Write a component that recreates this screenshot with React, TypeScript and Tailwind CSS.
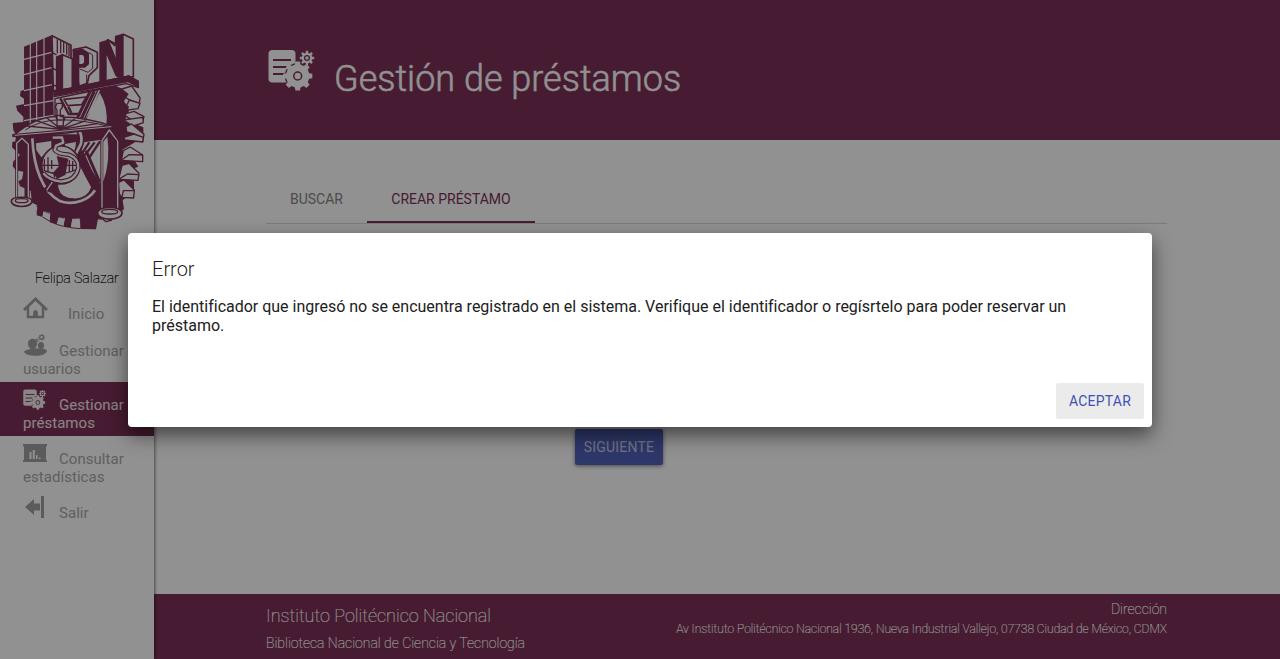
import React from "react";

const D = "#7d3156";
const G = "#ffffff";

function gear(cx: number, cy: number, ro: number, ri: number, teeth: number, hole: number) {
  const pts: string[] = [];
  const step = (Math.PI * 2) / teeth;
  for (let i = 0; i < teeth; i++) {
    const a = i * step - Math.PI / 2;
    const at = (r: number, t: number) =>
      `${(cx + r * Math.cos(a + t * step)).toFixed(2)} ${(cy + r * Math.sin(a + t * step)).toFixed(2)}`;
    pts.push(at(ri, -0.3), at(ro, -0.2), at(ro, 0.2), at(ri, 0.3));
  }
  return (
    `M${pts.join("L")}Z` +
    `M${cx - hole} ${cy}a${hole} ${hole} 0 1 0 ${hole * 2} 0a${hole} ${hole} 0 1 0 ${-hole * 2} 0Z`
  );
}

function LoanIcon({ className, back }: { className: string; back: string }) {
  return (
    <svg viewBox="0 0 48 42" className={className} fill="currentColor">
      <rect x="0.5" y="1" width="27" height="32.5" rx="4" />
      <path d="M5 11h18M5 18h16M5 25h13" stroke={back} strokeWidth="1.8" />
      <circle cx="29.7" cy="27" r="13" fill={back} />
      <path fillRule="evenodd" d={gear(29.7, 27, 14.8, 11.8, 8, 4.7)} />
      <circle cx="29.7" cy="27" r="3.2" />
      <path fillRule="evenodd" d={gear(39, 9, 7.3, 5.3, 8, 3)} />
      <circle cx="39" cy="9" r="1.7" />
    </svg>
  );
}

function HomeIcon() {
  return (
    <svg viewBox="0 0 25 22" className="h-[22px] w-[25px]" fill="none" stroke="currentColor">
      <path d="M1 13L12.5 2L24 13" strokeWidth="2.8" />
      <path d="M5 10V20H20V10" strokeWidth="2.4" />
      <path d="M10.5 20V15.5a2 2 0 0 1 4 0V20Z" fill="currentColor" strokeWidth="0.8" />
    </svg>
  );
}

function UsersIcon() {
  return (
    <svg viewBox="0 0 25 22" className="h-[22px] w-[25px]" fill="currentColor">
      <ellipse cx="9.5" cy="9.8" rx="4.6" ry="5" />
      <ellipse cx="18" cy="11.5" rx="3.1" ry="3.5" />
      <path d="M1 17.500c1.500-1.500 4-2 6.500-2.500V12h4v2c2 .4 3.500.8 5 .4V13h3v1.500c2 .5 4.500 1 4.500 2.500c-1 3-5 4.500-10 4.800C8 22 2 21 1 17.500Z" />
      <path fillRule="evenodd" d={gear(18.7, 3.3, 3.3, 2.5, 8, 1.3)} />
      <path fillRule="evenodd" d={gear(14, 6.2, 1.9, 1.4, 8, 0.6)} />
    </svg>
  );
}

function StatsIcon() {
  return (
    <svg viewBox="0 0 24 19" className="mt-[2px] h-[19px] w-[24px]" fill="currentColor">
      <path d="M0 0h24v2.500h-1V16h1v2H0v-2h1V2.500H0Z" />
      <path d="M6.500 8h2v7h-2ZM9.800 6h2v9h-2ZM13 11h1.600v4H13ZM15.800 13.500h1.700V15h-1.700Z" fill="#fff" />
    </svg>
  );
}

function ExitIcon() {
  return (
    <svg viewBox="0 0 20 22" className="ml-[2px] h-[22px] w-5" fill="currentColor">
      <path d="M0 11L9 3.000V7.500h6v7H9V19ZM16 0h3v22h-3Z" />
    </svg>
  );
}

function Emblem() {
  return (
    <svg viewBox="24 30 420 612" className="h-[204px] w-[140px]" strokeLinejoin="round">
      <path
        fill={D}
        d="M72 210L62 213L60 228L72 236V252L48 257L52 272L70 290V306L38 309L40 330L48 345L46 364L37 366L36 382L60 405L40 424L38 438L47 451L70 455L66 478L55 484L60 499L92 512L96 548L112 556L110 586L128 591L133 572L151 580L148 606L170 614L178 592L195 594L190 620L212 624L218 594L240 596L241 627L288 628L294 596L345 585L372 568L368 540L402 518V484L372 455L415 440L398 412L366 390L400 370L430 350V322L375 300L388 270L370 240L386 220L345 196L165 235V300L72 300Z"
      />
      <g fill={G} stroke={D} strokeWidth="4">
        <path d="M366 207L395 198L420 234L418 250L388 240L367 225Z" />
        <path d="M388 240L420 250L414 266L373 271Z" />
        <path d="M370 283L402 274L432 290L428 303L392 298Z" />
        <path d="M370 300L428 292L430 308L400 318Z" />
        <path d="M378 320L395 312L432 343L428 365L402 342L380 336Z" />
        <path d="M372 352L402 342L430 352L428 366L374 360Z" />
        <path d="M370 392L391 381L428 405V425L364 421Z" />
        <path d="M364 421L387 404L428 405" fill="none" />
        <path d="M366 436L387 430L417 460L414 481L356 478Z" />
        <path d="M356 478L382 462L416 464" fill="none" />
        <path d="M354 488L372 480L403 510L401 534L366 532L358 522Z" />
        <path d="M366 532L370 512L402 512" fill="none" />
        <path
          d="M110 558L128 562L132 574L148 583M110 574L130 582M174 590L192 596M151 604L170 608M216 594L240 599M193 617L213 618M292 596L308 597L318 605L336 600M243 622L266 621L269 602"
          fill="none"
        />
      </g>
      <path
        fill={G}
        d="M130 574L150 583L148 603L127 592ZM176 592L194 596L190 618L170 612ZM217 596H239V622L213 622Z"
      />
      <path
        stroke={D}
        strokeWidth="3"
        fill="none"
        d="M128 591L148 603M170 613L190 619M212 623L241 626"
      />

      <path fill={D} d="M72 80L155 46L162 318L72 330Z" />
      <path
        stroke={G}
        strokeWidth="3.500"
        fill="none"
        d="M91 66V330M110 60V330M132 52V330M72 118L155 97M72 164L155 143M72 212L156 194M72 257L160 242M72 302L160 286"
      />
      <path fill={G} stroke={D} strokeWidth="5" d="M156 47L213 76V116L187 105L170 112V210L160 214Z" />
      <path
        stroke={D}
        strokeWidth="4"
        fill="none"
        d="M156 97L170 105M156 143L170 151M156 193L170 199M172 58V100M182 62V100M191 66V98M200 72V104M207 75V108"
      />

      <path fill={G} stroke={D} strokeWidth="5" d="M187 104L217 116V205L187 209Z" />
      <path fill={D} d="M168 110L188 102V213H170Z" />
      <path fill={G} stroke={D} strokeWidth="5" d="M220 89L258 81L292 97V143L267 167L262 190L237 199Z" />
      <path fill={D} d="M218 90L248 86L267 98V133L255 143H238V199L218 203Z" />
      <path fill={G} d="M238 105H248L252 110V127L247 132H238Z" />
      <path d="M267 98L278 105V145L264 157L240 147M260 163V192" stroke={D} strokeWidth="3" fill="none" />
      <path fill={G} stroke={D} strokeWidth="5" d="M323 59L347 72L347 50L370 43L400 57V170L371 179Z" />
      <path fill={D} d="M298 67L323 59L347 119V50L371 43V180L347 169L320 105V187L298 193Z" />
      <path d="M323 59L347 78" stroke={D} strokeWidth="5" />

      <path fill={G} stroke={D} strokeWidth="4" d="M162 230L380 191L415 203V184L387 168L162 215Z" />
      <path fill={D} d="M162 213L387 166L417 183L416 203L384 187L162 229Z" />
      <path fill={G} stroke={D} strokeWidth="4" d="M165 236L304 207L280 265L240 325L240 345L165 345Z" />
      <path d="M192 238L259 231L245 254L203 257Z" fill={G} stroke={D} strokeWidth="5" />
      <path d="M181 235L206 282H241M205 260L214 278" stroke={D} strokeWidth="7" fill="none" />
      <path d="M271 213L234 290L218 320M283 213L243 298L230 330" stroke={D} strokeWidth="9" fill="none" />
      <path d="M293 211L244 317" stroke={D} strokeWidth="4" />
      <path fill={D} d="M304 207Q336 275 322 345L352 360L387 260L370 246L386 222L364 205L341 198Z" />
      <path fill={G} d="M299 218Q326 260 319 320L250 315Z" />

      <path d="M97 355C101 440 126 516 181 544C224 558 267 539 285 511" stroke={G} strokeWidth="8" fill="none" />
      <path d="M108 370L154 363V385L124 412L109 390Z" fill={G} />
      <path d="M195 372L228 366L224 402L196 392Z" fill={G} />
      <path d="M250 365L322 355Q335 427 300 494L241 399Z" fill={G} stroke={D} strokeWidth="4" />
      <path d="M245 393L291 496M258 392L299 486M232 398L276 507" stroke={D} strokeWidth="9" fill="none" />
      <path d="M268 367L246 400M284 367L255 405M300 364L267 414" stroke={D} strokeWidth="7" />
      <path
        d="M175 481Q216 478 231 416Q250 457 275 502Q264 534 227 537Q180 538 173 501Z"
        fill={G}
        stroke={D}
        strokeWidth="3"
      />
      <path d="M208 302Q252 332 243 371L227 403" stroke={D} strokeWidth="18" fill="none" />
      <path d="M208 302Q252 332 243 371L227 403" stroke={G} strokeWidth="8" fill="none" />

      <circle cx="182" cy="435" r="57" fill={G} stroke={D} strokeWidth="5" />
      <path d="M170 408L205 416L196 465L164 480L159 459L177 438Z" fill={D} />
      <path
        d="M124 436H237M133 418V451M144 412V456M155 420V447M208 420V455M218 423V452M132 452Q182 472 232 447"
        stroke={D}
        strokeWidth="4"
        fill="none"
      />
      <path d="M130 509L158 474L172 483L152 518Z" fill={D} />
      <path d="M140 511L168 470" stroke={G} strokeWidth="4" />
      <path
        d="M158 353L186 352L190 368L168 377L164 390Q172 402 206 404Q237 415 235 445Q226 482 184 485Q148 482 130 460"
        stroke={D}
        strokeWidth="14"
        fill="none"
      />
      <path
        d="M158 353L186 352L190 368L168 377L164 390Q172 402 206 404Q237 415 235 445Q226 482 184 485Q148 482 130 460"
        stroke={G}
        strokeWidth="7"
        fill="none"
      />

      <path d="M40 348Q114 283 185 291Q260 291 340 320L200 339Z" fill={G} stroke={D} strokeWidth="4" />
      <path d="M76 330Q116 301 181 299Q260 301 324 319" stroke={D} strokeWidth="3" fill="none" />
      <path
        d="M182 328L80 318M182 328L110 302M182 328L141 294M182 328L168 291M182 328L196 291M182 328L225 296M182 328L258 302M182 328L292 311"
        stroke={D}
        strokeWidth="4"
      />
      <path d="M37 347L183 334L339 320" stroke={D} strokeWidth="10" />
      <path d="M44 346L183 334L334 320" stroke={G} strokeWidth="3" />
      <path d="M171 250H187V262L181 270V290H190V318H171V270L166 262Z" fill={G} stroke={D} strokeWidth="4" />
      <path d="M165 286H193M171 300H188" stroke={D} strokeWidth="4" />

      <path d="M50 532V370L66 355L85 373V530M78 535V372" stroke={D} strokeWidth="9" fill="none" />
      <path d="M50 532V370L66 355L85 373V530" stroke={G} strokeWidth="4" fill="none" />
      <path d="M306 566V362L328 330L353 364V568" stroke={D} strokeWidth="10" fill="none" />
      <path d="M306 566V362L328 330L353 364V568" stroke={G} strokeWidth="4" fill="none" />
      <path d="M310 512L328 556L350 520V362L328 338L310 365Z" fill={D} />
      <path d="M310 365L322 350Q332 420 310 485Z" fill={G} />
      <path d="M34 543C34 528 96 528 96 543C96 565 34 565 34 543Z" fill={G} stroke={D} strokeWidth="5" />
      <ellipse cx="65" cy="542" rx="19" ry="6" fill={G} stroke={D} strokeWidth="4" />
      <path d="M293 578C293 557 366 557 366 578C366 604 293 604 293 578Z" fill={G} stroke={D} strokeWidth="5" />
      <ellipse cx="329" cy="575" rx="24" ry="7" fill={G} stroke={D} strokeWidth="4" />
    </svg>
  );
}

function NavItem({
  icon,
  first,
  second,
  active,
  gap = "w-[36px]",
}: {
  icon: React.ReactNode;
  first: string;
  second?: string;
  active?: boolean;
  gap?: string;
}) {
  return (
    <a
      className={`block pl-[23px] text-[15px] leading-[18px] tracking-[0.04px] ${
        active ? "bg-[#7d3156] text-white/90" : "text-[#a8a8a8]"
      } ${second ? "h-[54px]" : "h-[36px]"}`}
    >
      <span className="flex h-8 items-end">
        <span
          className={`flex h-[26px] shrink-0 items-start ${gap} ${active ? "text-white/90" : "text-[#a0a0a0]"}`}
        >
          {icon}
        </span>
        <span>{first}</span>
      </span>
      {second && <span className="block">{second}</span>}
    </a>
  );
}

export default function App() {
  return (
    <div className="relative flex h-[659px] w-full overflow-hidden bg-white font-['Roboto',sans-serif] antialiased">
      <aside className="z-10 flex w-[154px] shrink-0 flex-col bg-white shadow-[1px_0_3px_rgba(0,0,0,0.5)]">
        <div className="pt-[30px] pl-2">
          <Emblem />
        </div>
        <div className="mt-[35px] pl-[35px] text-[14px] leading-[18px] font-thin text-black [-webkit-text-stroke:0.2px_#000000]">
          Felipa Salazar
        </div>
        <nav className="mt-[4px] flex flex-col">
          <NavItem icon={<HomeIcon />} first="Inicio" gap="w-[45px]" />
          <div className="h-[1px]" />
          <NavItem icon={<UsersIcon />} first="Gestionar" second="usuarios" />
          <NavItem
            icon={<LoanIcon className="mt-px h-[21px] w-6" back="#7d3156" />}
            first="Gestionar"
            second="préstamos"
            active
          />
          <NavItem icon={<StatsIcon />} first="Consultar" second="estadísticas" />
          <NavItem icon={<ExitIcon />} first="Salir" />
        </nav>
      </aside>

      <main className="flex flex-1 flex-col">
        <header className="flex h-[140px] shrink-0 bg-[#7d3156] pt-[49px] pl-[114px] text-white">
          <LoanIcon className="h-[42px] w-12" back="#7d3156" />
          <h1 className="ml-[18px] pt-2 text-[36px] leading-[44px] font-light [-webkit-text-stroke:0.5px_#ffffff]">
            Gestión de préstamos
          </h1>
        </header>
        <section className="flex flex-1 flex-col pr-[113px] pl-[112px]">
          <div className="mt-[35px] flex h-[49px] border-b border-[#d8d8d8] text-[14px] leading-[48px]">
            <div className="w-[101px] text-center text-[#868686]">BUSCAR</div>
            <div className="h-12 w-[168px] border-b-2 border-[#7d3156] text-center text-[#7d3156]">CREAR PRÉSTAMO</div>
          </div>
          <button className="mt-[205px] ml-[309px] h-9 w-[88px] rounded-[2px] bg-[#5262ba] text-[14px] tracking-[0.2px] text-white/70 shadow-[0_1px_4px_rgba(0,0,0,0.5)]">
            SIGUIENTE
          </button>
        </section>
        <footer className="flex h-[65px] shrink-0 justify-between bg-[#7d3156] pr-[113px] pl-[112px] text-white">
          <div className="pt-[11px] font-thin [-webkit-text-stroke:0.2px_#ffffff]">
            <div className="text-[18px] leading-[22px]">Instituto Politécnico Nacional</div>
            <div className="mt-[7px] text-[14px] leading-[18px]">Biblioteca Nacional de Ciencia y Tecnología</div>
          </div>
          <div className="pt-[6px] text-right font-thin [-webkit-text-stroke:0.2px_#ffffff]">
            <div className="text-[14px] leading-[18px]">Dirección</div>
            <div className="mt-[3px] text-[12px] leading-4">
              Av Instituto Politécnico Nacional 1936, Nueva Industrial Vallejo, 07738 Ciudad de México, CDMX
            </div>
          </div>
        </footer>
      </main>

      <div className="absolute inset-0 z-20 flex items-start justify-center bg-black/43 pt-[233px]">
        <div
          role="dialog"
          className="flex h-[194px] w-[1024px] flex-col rounded-[4px] bg-white shadow-[0_8px_20px_rgba(0,0,0,0.55)]"
        >
          <h2 className="px-6 pt-6 text-[20px] leading-6 font-light text-black/90">Error</h2>
          <p className="px-6 pt-4 text-[16px] leading-[19px] tracking-[-0.01px] text-[#212121]">
            El identificador que ingresó no se encuentra registrado en el sistema. Verifique el identificador o
            regísrtelo para poder reservar un préstamo.
          </p>
          <button className="mt-auto mr-2 mb-2 h-9 w-[88px] self-end rounded-[2px] bg-[#ebebeb] text-[14px] tracking-[0.2px] text-[#3f51b5]">
            ACEPTAR
          </button>
        </div>
      </div>
    </div>
  );
}
